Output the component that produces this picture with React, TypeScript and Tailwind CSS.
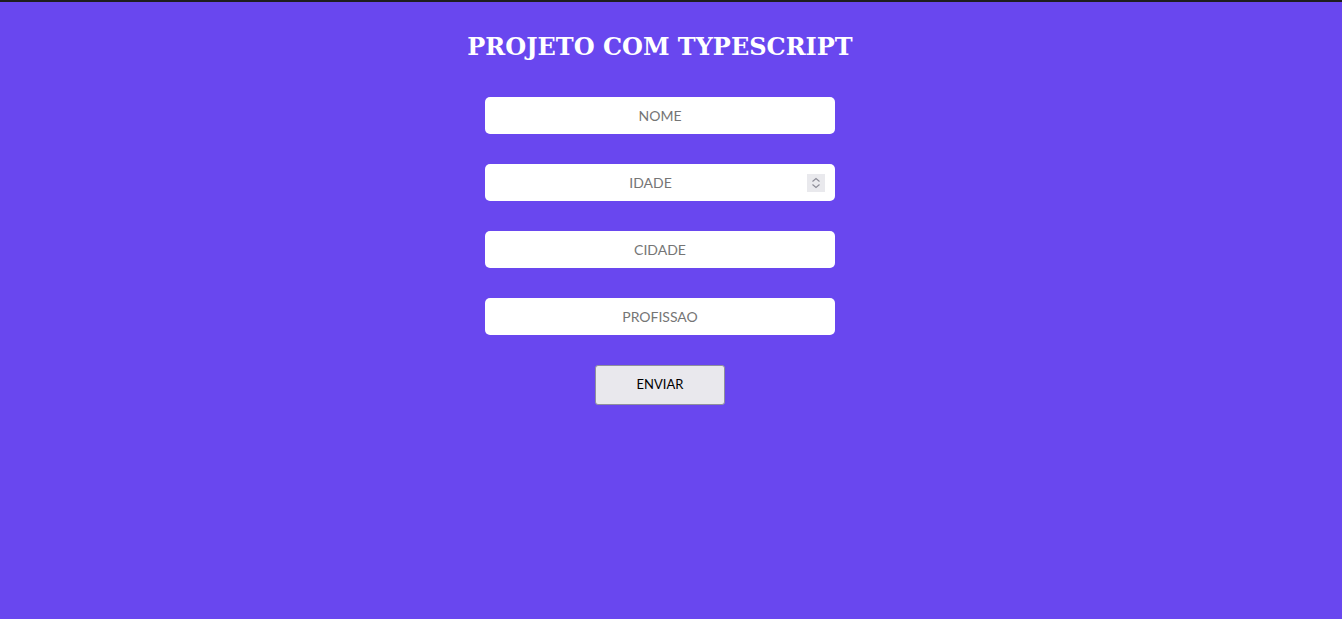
export default function App() {
  const fields = [
    { name: "nome", placeholder: "NOME", type: "text" },
    { name: "idade", placeholder: "IDADE", type: "number" },
    { name: "cidade", placeholder: "CIDADE", type: "text" },
    { name: "profissao", placeholder: "PROFISSAO", type: "text" },
  ]

  return (
    <div className="w-full h-[619px] bg-[#6947ef] border-t-2 border-[#1e1e1e] flex flex-col items-center pr-[22px]">
      <h1 className="mt-[30px] text-white text-[24px] font-bold font-['DejaVu_Serif',serif] leading-[30px]">
        PROJETO COM TYPESCRIPT
      </h1>
      <form className="mt-[35px] flex flex-col items-center gap-[30px]" onSubmit={(e) => e.preventDefault()}>
        {fields.map((field) =>
          field.type === "number" ? (
            <div key={field.name} className="relative">
              <input
                name={field.name}
                type="number"
                placeholder={field.placeholder}
                className="w-[350px] h-[37px] bg-white rounded-[5px] pl-2 pr-[27px] text-center text-[14px] font-['Lato',sans-serif] text-[#333] placeholder:text-[#757575] outline-none [appearance:textfield] [&::-webkit-inner-spin-button]:appearance-none [&::-webkit-outer-spin-button]:appearance-none"
              />
              <div className="absolute right-[10px] top-[10px] w-[18px] h-[18px] bg-[#e9e9ed] flex items-center justify-center pointer-events-none">
                <svg width="10" height="14" viewBox="0 0 10 14" fill="none" stroke="#8b8b96" strokeWidth="1.1">
                  <path d="M1.5 5.5 L5 2.5 L8.5 5.5" />
                  <path d="M1.5 8.5 L5 11.5 L8.5 8.5" />
                </svg>
              </div>
            </div>
          ) : (
            <input
              key={field.name}
              name={field.name}
              type={field.type}
              placeholder={field.placeholder}
              className="w-[350px] h-[37px] bg-white rounded-[5px] px-2 text-center text-[14px] font-['Lato',sans-serif] text-[#333] placeholder:text-[#757575] outline-none"
            />
          )
        )}
        <button
          type="submit"
          className="w-[130px] h-[40px] bg-[#e9e8ed] border border-[#8f8f9d] rounded-[3px] text-[13px] font-['Lato',sans-serif] text-black"
        >
          ENVIAR
        </button>
      </form>
    </div>
  )
}
